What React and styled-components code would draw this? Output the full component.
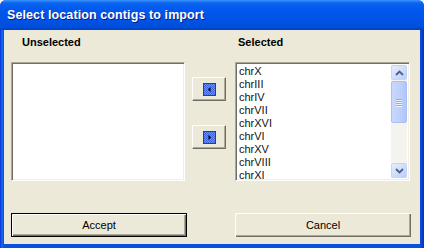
import React from 'react'
import styled, { createGlobalStyle } from 'styled-components'

const Global = createGlobalStyle`
  html, body { margin: 0; padding: 0; background: #ffffff; }
  body { font-family: "Liberation Sans", Arial, sans-serif; }
`

const Window = styled.div`
  width: 424px;
  height: 248px;
  display: flex;
  flex-direction: column;
  box-sizing: border-box;
  background: linear-gradient(to right, #0831d9 0, #166aee 2px, #0a50e0 4px, #0a50e0 calc(100% - 4px), #0831b8 100%);
  border-radius: 6px 6px 0 0;
  overflow: hidden;
`

const TitleBar = styled.div`
  height: 30px;
  flex: none;
  display: flex;
  align-items: center;
  padding-left: 7px;
  background: linear-gradient(to bottom, #3d95ff 0, #0a64f0 3px, #0058ee 10px, #0054e6 60%, #004fdc 90%, #003fc0 100%);
  color: #ffffff;
  font-weight: bold;
  font-size: 12.5px;
  text-shadow: 1px 1px 0 #0a1e8a;
  letter-spacing: 0.1px;
`

const Client = styled.div`
  flex: 1;
  margin: 0 4px 4px 4px;
  background: #ece9d8;
  display: grid;
  grid-template-columns: 174px 36px 176px;
  grid-template-rows: 25px 119px 32px 24px;
  column-gap: 7px;
  padding-left: 7px;
  padding-top: 7px;
  font-size: 11px;
  color: #000000;
`

const Label = styled.div`
  font-weight: bold;
  padding-left: ${p => p.$indent}px;
  margin-top: -1px;
  grid-column: ${p => p.$col};
`

const ListBox = styled.div`
  grid-column: ${p => p.$col};
  grid-row: 2;
  background: #ffffff;
  border-top: 1px solid #aca899;
  border-left: 1px solid #aca899;
  border-right: 1px solid #ffffff;
  border-bottom: 1px solid #ffffff;
  box-shadow: inset 1px 1px 0 #716f64, inset -1px -1px 0 #f1efe2;
  display: flex;
  overflow: hidden;
  margin-right: ${p => p.$trim || 0}px;
`

const Items = styled.div`
  flex: 1;
  padding: 2px 0 0 3px;
  line-height: 13px;
  overflow: hidden;
  color: #111111;
`

const Scrollbar = styled.div`
  width: 16px;
  margin: 2px 2px 2px 0;
  background: #f4f3ee;
  display: flex;
  flex-direction: column;
  gap: 1px;
`

const ScrollButton = styled.div`
  height: 15px;
  box-sizing: border-box;
  border: 1px solid #c3d3fd;
  border-radius: 2px;
  background: linear-gradient(to bottom right, #e6eefc, #bccffb);
  display: flex;
  align-items: center;
  justify-content: center;
`

const Thumb = styled.div`
  height: 42px;
  box-sizing: border-box;
  border: 1px solid #a8c0f4;
  border-radius: 2px;
  background: linear-gradient(to right, #c9d8fc, #bcd0fb 60%, #b0c6f8);
  display: flex;
  flex-direction: column;
  align-items: center;
  justify-content: center;
  gap: 1px;
`

const Grip = styled.div`
  width: 6px;
  height: 1px;
  background: #8eadf1;
  box-shadow: 0 1px 0 #eef3fe;
`

const Track = styled.div`
  flex: 1;
`

const Middle = styled.div`
  grid-column: 2;
  grid-row: 2;
  display: flex;
  flex-direction: column;
  padding-top: 15px;
  gap: 24px;
`

const ArrowButton = styled.div`
  width: 34px;
  height: 24px;
  box-sizing: border-box;
  background: #ece9d8;
  border-top: 1px solid #ffffff;
  border-left: 1px solid #ffffff;
  border-right: 1px solid #716f64;
  border-bottom: 1px solid #716f64;
  box-shadow: inset -1px -1px 0 #aca899;
  display: flex;
  align-items: center;
  justify-content: center;
`

const PushButton = styled.div`
  grid-row: 4;
  grid-column: ${p => p.$col};
  width: 176px;
  box-sizing: border-box;
  background: #ece9d8;
  display: flex;
  align-items: center;
  justify-content: center;
  font-size: 11px;
  border: ${p => (p.$default ? '1px solid #000000' : 'none')};
  box-shadow: inset 1px 1px 0 #ffffff, inset -1px -1px 0 #716f64, inset -2px -2px 0 #aca899;
`

const Chevron = ({ up }) => (
  <svg width="9" height="6" viewBox="0 0 9 6">
    <path d={up ? 'M1 5 L4.5 1.5 L8 5' : 'M1 1 L4.5 4.5 L8 1'} fill="none" stroke="#4d6185" strokeWidth="1.8" />
  </svg>
)

const MoveIcon = ({ dir }) => (
  <svg width="13" height="13" viewBox="0 0 13 13">
    <defs>
      <pattern id={`dots-${dir}`} width="2" height="2" patternUnits="userSpaceOnUse">
        <rect width="2" height="2" fill="#6e95f0" />
        <rect width="1" height="1" fill="#3a62d8" />
        <rect x="1" y="1" width="1" height="1" fill="#3a62d8" />
      </pattern>
    </defs>
    <rect x="0.5" y="0.5" width="12" height="12" fill={`url(#dots-${dir})`} stroke="#1c3fae" />
    <path d={dir === 'left' ? 'M7.5 4 L5 6.5 L7.5 9 Z' : 'M5.5 4 L8 6.5 L5.5 9 Z'} fill="#000000" />
  </svg>
)

const contigs = ['chrX', 'chrIII', 'chrIV', 'chrVII', 'chrXVI', 'chrVI', 'chrXV', 'chrVIII', 'chrXI']

export default function App() {
  return (
    <>
      <Global />
      <Window>
        <TitleBar>Select location contigs to import</TitleBar>
        <Client>
          <Label $col={1} $indent={11}>Unselected</Label>
          <Label $col={3} $indent={3}>Selected</Label>
          <ListBox $col={1} />
          <Middle>
            <ArrowButton><MoveIcon dir="left" /></ArrowButton>
            <ArrowButton><MoveIcon dir="right" /></ArrowButton>
          </Middle>
          <ListBox $col={3} $trim={1}>
            <Items>
              {contigs.map(c => <div key={c}>{c}</div>)}
            </Items>
            <Scrollbar>
              <ScrollButton><Chevron up /></ScrollButton>
              <Thumb><Grip /><Grip /><Grip /><Grip /></Thumb>
              <Track />
              <ScrollButton><Chevron /></ScrollButton>
            </Scrollbar>
          </ListBox>
          <PushButton $col={1} $default>Accept</PushButton>
          <PushButton $col={3}>Cancel</PushButton>
        </Client>
      </Window>
    </>
  )
}
